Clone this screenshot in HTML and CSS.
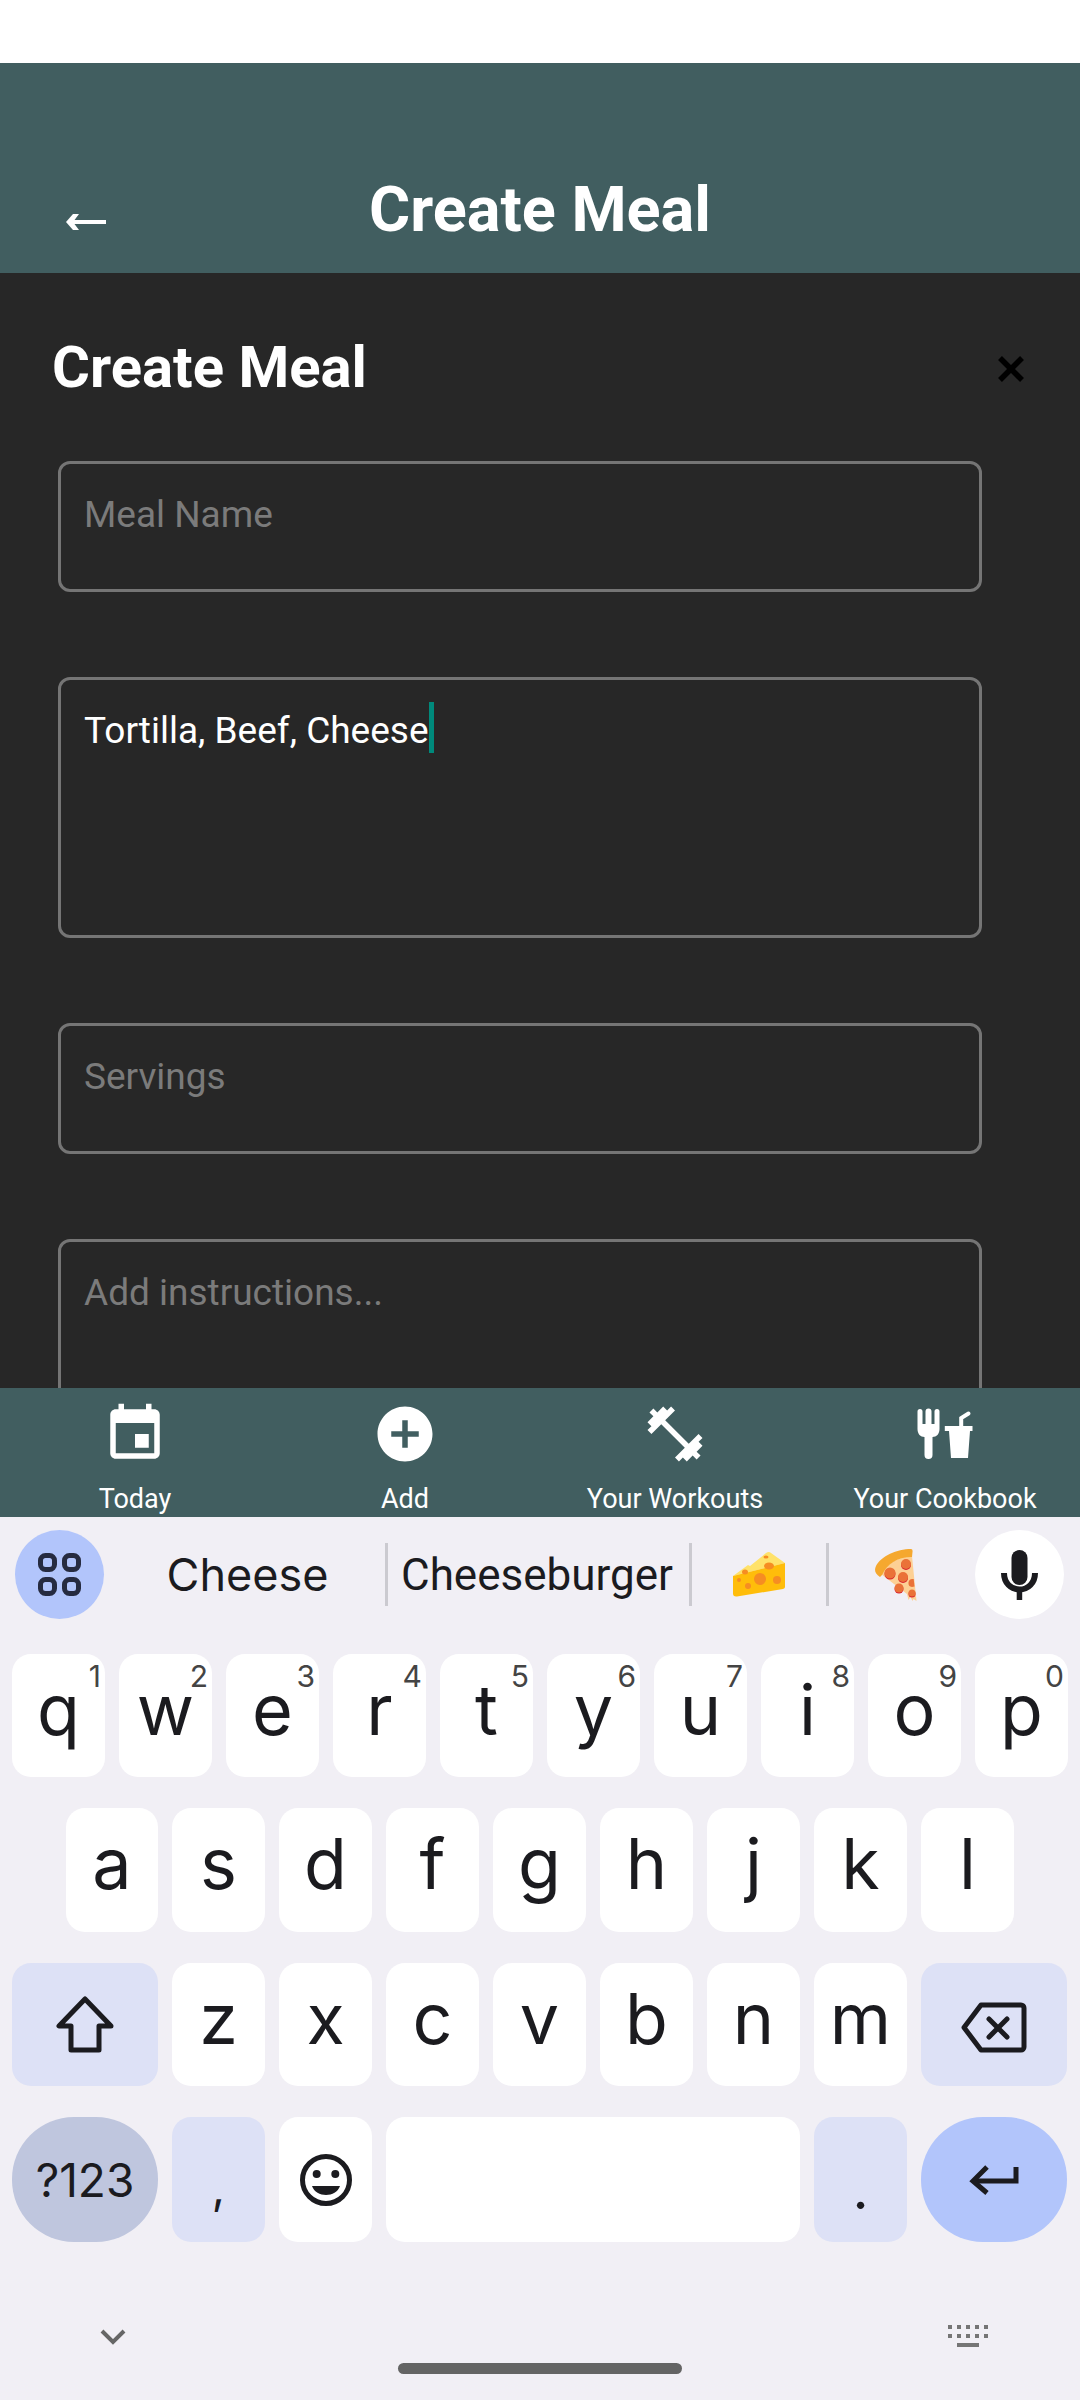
FILE: index.html
```html
<!DOCTYPE html>
<html lang="en">
<head>
  <meta charset="UTF-8" />
  <title>Create Meal</title>
  <link rel="stylesheet" href="styles.css">
</head>
<body>
  <div class="status-bar"></div>

  <header class="top-bar">
    <svg class="back-arrow" width="40" height="18" viewBox="0 0 40 18">
      <path d="M0 9L7 1h6L8.500 7H40v4H8.500L13 17H7z" fill="#fff"/>
    </svg>
    <h1 class="top-title">Create Meal</h1>
  </header>

  <main class="content">
    <div class="modal-head">
      <h2 class="modal-title">Create Meal</h2>
      <svg class="modal-close" width="26" height="26" viewBox="0 0 26 26">
        <path d="M2 2l22 22M24 2L2 24" stroke="#000" stroke-width="5.500" fill="none"/>
      </svg>
    </div>

    <form class="meal-form">
      <div class="field field-short"><span class="placeholder">Meal Name</span></div>
      <div class="field field-tall"><span class="typed">Tortilla, Beef, Cheese</span><span class="caret"></span></div>
      <div class="field field-short"><span class="placeholder">Servings</span></div>
      <div class="field field-tall"><span class="placeholder">Add instructions...</span></div>
    </form>
  </main>

  <nav class="tab-bar">
    <div class="tab">
      <svg class="tab-icon" viewBox="0 0 24 24"><path fill="#fff" d="M17 12h-5v5h5v-5zM16 1v2H8V1H6v2H5c-1.110 0-1.990.9-1.990 2L3 19c0 1.100.89 2 2 2h14c1.100 0 2-.9 2-2V5c0-1.100-.9-2-2-2h-1V1h-2zm3 18H5V8h14v11z"/></svg>
      <span class="tab-label">Today</span>
    </div>
    <div class="tab">
      <svg class="tab-icon" viewBox="0 0 24 24"><path fill="#fff" d="M12 2C6.480 2 2 6.480 2 12s4.480 10 10 10 10-4.480 10-10S17.520 2 12 2zm5 11h-4v4h-2v-4H7v-2h4V7h2v4h4v2z"/></svg>
      <span class="tab-label">Add</span>
    </div>
    <div class="tab">
      <svg class="tab-icon" viewBox="0 0 24 24"><path fill="#fff" d="M20.570 14.860L22 13.430 20.570 12 17 15.570 8.430 7 12 3.430 10.570 2 9.140 3.430 7.710 2 5.570 4.140 4.140 2.710 2.710 4.140l1.430 1.430L2 7.710l1.430 1.430L2 10.570 3.430 12 7 8.430 15.570 17 12 20.570 13.430 22l1.430-1.430L16.290 22l2.140-2.140 1.430 1.430 1.430-1.430-1.430-1.430L22 16.290z"/></svg>
      <span class="tab-label">Your Workouts</span>
    </div>
    <div class="tab">
      <svg class="tab-icon" viewBox="-5.500 -8 66 66">
        <path fill="#fff" d="M0 2.500a2.500 2.500 0 0 1 5 0V15h3V2.500a3 3 0 0 1 6 0V15h3V2.500a2.500 2.500 0 0 1 5 0V20c0 5-3 8-7 8v18a4 4 0 0 1-8 0V28c-4 0-7-3-7-8z"/>
        <path fill="#fff" d="M27.300 17H55v5h-2.500l-2 27h-17l-2-27h-4.200z"/>
        <path fill="none" stroke="#fff" stroke-width="4" stroke-linecap="round" d="M43.700 17V9L51 4.500"/>
      </svg>
      <span class="tab-label">Your Cookbook</span>
    </div>
  </nav>

  <section class="keyboard">
    <div class="suggestions">
      <div class="round-btn apps-btn">
        <svg width="43" height="43" viewBox="0 0 43 43" fill="none" stroke="#262b40" stroke-width="5">
          <rect x="2.500" y="2.500" width="14" height="14" rx="5"/>
          <rect x="26.500" y="2.500" width="14" height="14" rx="5"/>
          <rect x="2.500" y="26.500" width="14" height="14" rx="5"/>
          <rect x="26.500" y="26.500" width="14" height="14" rx="5"/>
        </svg>
      </div>
      <div class="suggestion suggestion-word">Cheese</div>
      <div class="suggestion suggestion-long">Cheeseburger</div>
      <div class="suggestion suggestion-emoji">
        <svg width="52" height="45" viewBox="0 0 52 45">
          <path fill="#ffe26a" d="M0 24L15 13l2 1L33 1q3-2 5 0l14 10z"/>
          <path fill="#ffbd0a" d="M0 24L52 11v24q0 1.500-2 2L4 44.500q-4 .5-4-3z"/>
          <g fill="#f68d22">
            <circle cx="27" cy="27" r="6"/>
            <ellipse cx="36" cy="14" rx="5" ry="3.500"/>
            <circle cx="44" cy="28" r="4"/>
            <circle cx="15" cy="34" r="3"/>
            <circle cx="6" cy="28" r="2"/>
            <ellipse cx="12" cy="20" rx="3" ry="2.500"/>
            <ellipse cx="33" cy="5" rx="2.500" ry="1.500"/>
          </g>
        </svg>
      </div>
      <div class="suggestion suggestion-last">
        <svg width="42" height="52" viewBox="0 0 42 52">
          <path fill="#fdd094" d="M6 25C12 14 24 8 37 7l4.500 45-3-2-1 2-2-4-2 3-1.500-6z"/>
          <path fill="#f5a82f" d="M5 28C0 25-1 21 1 17 6 7 22 0 36 0q2 0 1.500 3L37 8C22 8 12 15 7 26z"/>
          <g fill="#d9232e">
            <circle cx="31" cy="16" r="5"/>
            <circle cx="15" cy="25" r="5.500"/>
            <circle cx="28" cy="29" r="5"/>
            <circle cx="24" cy="40" r="4.500"/>
            <circle cx="37" cy="45" r="3.500"/>
          </g>
          <g fill="#ea7238">
            <circle cx="31" cy="15" r="5"/>
            <circle cx="15" cy="24" r="5.500"/>
            <circle cx="28" cy="28" r="5"/>
            <path d="M38 30a4 4 0 0 0-1 8l2.500-.5-.8-7.400z"/>
            <circle cx="24" cy="39" r="4.500"/>
            <circle cx="37" cy="44" r="3.500"/>
          </g>
        </svg>
      </div>
      <div class="round-btn mic-btn">
        <svg width="37" height="50" viewBox="0 0 37 50" fill="#1b1b1f">
          <rect x="10.500" y="0" width="16" height="35" rx="8"/>
          <path fill="none" stroke="#1b1b1f" stroke-width="6" d="M3 23c0 10 7 16.500 15.500 16.500S34 33 34 23"/>
          <rect x="15.700" y="38" width="5.500" height="12"/>
        </svg>
      </div>
    </div>

    <div class="key-rows">
      <div class="key-row">
        <div class="key">q<span class="hint">1</span></div>
        <div class="key">w<span class="hint">2</span></div>
        <div class="key">e<span class="hint">3</span></div>
        <div class="key">r<span class="hint">4</span></div>
        <div class="key">t<span class="hint">5</span></div>
        <div class="key">y<span class="hint">6</span></div>
        <div class="key">u<span class="hint">7</span></div>
        <div class="key">i<span class="hint">8</span></div>
        <div class="key">o<span class="hint">9</span></div>
        <div class="key">p<span class="hint">0</span></div>
      </div>
      <div class="key-row key-row-home">
        <div class="key">a</div>
        <div class="key">s</div>
        <div class="key">d</div>
        <div class="key">f</div>
        <div class="key">g</div>
        <div class="key">h</div>
        <div class="key">j</div>
        <div class="key">k</div>
        <div class="key">l</div>
      </div>
      <div class="key-row">
        <div class="key key-wide key-action">
          <svg width="58" height="57" viewBox="0 0 58 57" fill="none" stroke="#1b1b1f" stroke-width="5" stroke-linejoin="round">
            <path d="M29 3L3 30h12v24h28V30h12z"/>
          </svg>
        </div>
        <div class="key">z</div>
        <div class="key">x</div>
        <div class="key">c</div>
        <div class="key">v</div>
        <div class="key">b</div>
        <div class="key">n</div>
        <div class="key">m</div>
        <div class="key key-wide key-action">
          <svg class="backspace-icon" width="66" height="51" viewBox="0 0 66 51" fill="none" stroke="#1b1b1f" stroke-width="5" stroke-linejoin="round" stroke-linecap="round">
            <path d="M20 3h40a3 3 0 0 1 3 3v39a3 3 0 0 1-3 3H20L3 25.500z"/>
            <path d="M28 17l18 18M46 17L28 35"/>
          </svg>
        </div>
      </div>
      <div class="key-row key-row-bottom">
        <div class="key key-wide key-symbols">?123</div>
        <div class="key key-action key-comma">,</div>
        <div class="key">
          <svg width="52" height="52" viewBox="0 0 52 52">
            <circle cx="26" cy="26" r="23.500" fill="none" stroke="#1b1b1f" stroke-width="5"/>
            <circle cx="16.700" cy="20" r="4" fill="#1b1b1f"/>
            <circle cx="35.300" cy="20" r="4" fill="#1b1b1f"/>
            <path d="M12 32h28c-2 6-8 9-14 9s-12-3-14-9z" fill="#1b1b1f"/>
          </svg>
        </div>
        <div class="key key-space"></div>
        <div class="key key-action key-period">.</div>
        <div class="key key-wide key-enter">
          <svg width="50" height="30" viewBox="0 0 50 30" fill="none" stroke="#1b1b1f" stroke-width="5">
            <path d="M47 2v14H6"/>
            <path d="M18 2L4 16l14 12"/>
          </svg>
        </div>
      </div>
    </div>

    <div class="keyboard-foot">
      <svg width="26" height="16" viewBox="0 0 26 16" fill="none" stroke="#666" stroke-width="4">
        <path d="M2 2l11 11L24 2"/>
      </svg>
      <svg width="40" height="23" viewBox="0 0 40 23" fill="#757575">
        <path d="M0 0h4v4H0zM9 0h4v4H9zM18 0h4v4h-4zM27 0h4v4h-4zM36 0h4v4h-4zM0 9h4v4H0zM9 9h4v4H9zM18 9h4v4h-4zM27 9h4v4h-4zM36 9h4v4h-4zM9 18h22v4H9z"/>
      </svg>
    </div>
    <div class="home-pill"></div>
  </section>
</body>
</html>
```

FILE: styles.css
```css
* {
  box-sizing: border-box;
}

body {
  margin: 0;
  width: 1080px;
  height: 2400px;
  overflow: hidden;
  display: flex;
  flex-direction: column;
  background: #fff;
  font-family: Roboto, sans-serif;
}

.status-bar {
  height: 63px;
  background: #fff;
}

/* App bar */
.top-bar {
  position: relative;
  height: 210px;
  padding-top: 112px;
  background: #415e60;
  text-align: center;
}

.top-title {
  margin: 0;
  font-size: 63px;
  line-height: 70px;
  font-weight: 700;
  color: #fff;
}

.back-arrow {
  position: absolute;
  left: 66px;
  top: 150px;
}

/* Form area */
.content {
  height: 1115px;
  overflow: hidden;
  background: #272727;
}

.modal-head {
  display: flex;
  justify-content: space-between;
  align-items: center;
  height: 70px;
  margin-top: 59px;
  padding: 0 56px 0 52px;
}

.modal-title {
  margin: 0;
  font-size: 58px;
  line-height: 64px;
  font-weight: 700;
  color: #fff;
}

.modal-close {
  margin-top: 4px;
}

.meal-form {
  display: flex;
  flex-direction: column;
  gap: 85px;
  width: 924px;
  margin: 59px 0 0 58px;
}

.field {
  flex: none;
  padding: 27px 23px;
  border: 3px solid #757575;
  border-radius: 12px;
  font-size: 37px;
  line-height: 48px;
}

.field-short {
  height: 131px;
}

.field-tall {
  height: 261px;
}

.placeholder {
  color: #7b7b7b;
}

.typed {
  color: #fff;
}

.caret {
  display: inline-block;
  vertical-align: top;
  width: 5px;
  height: 51px;
  margin-top: -5px;
  margin-bottom: -5px;
  background: #00897b;
}

/* Bottom tabs */
.tab-bar {
  display: flex;
  height: 129px;
  background: #415e60;
}

.tab {
  flex: 1;
  display: flex;
  flex-direction: column;
  align-items: center;
  padding-top: 13px;
}

.tab-icon {
  width: 66px;
  height: 66px;
}

.tab-label {
  margin-top: 16px;
  font-size: 27px;
  line-height: 32px;
  color: #fff;
  white-space: nowrap;
}

/* Keyboard */
.keyboard {
  position: relative;
  flex: 1;
  background: #f1eff5;
  color: #1b1b1f;
  font-family: Inter, sans-serif;
}

.suggestions {
  display: flex;
  align-items: center;
  height: 89px;
  margin-top: 13px;
  padding-left: 15px;
}

.round-btn {
  flex: none;
  display: flex;
  align-items: center;
  justify-content: center;
  width: 89px;
  height: 89px;
  border-radius: 50%;
}

.apps-btn {
  background: #b2c5fb;
}

.mic-btn {
  margin-left: 13px;
  background: #fff;
}

.suggestion {
  flex: none;
  display: flex;
  align-items: center;
  justify-content: center;
  height: 63px;
  font-size: 45px;
  border-right: 3px solid #cbcad0;
}

.suggestion-word {
  width: 284px;
  padding-left: 6px;
}

.suggestion-long {
  width: 304px;
  padding-right: 3px;
  font-family: Roboto, sans-serif;
  font-size: 44px;
}

.suggestion-emoji {
  width: 137px;
}

.suggestion-last {
  width: 133px;
  border-right: none;
}

.key-rows {
  display: flex;
  flex-direction: column;
  gap: 31px;
  margin-top: 35px;
  padding-left: 12px;
}

.key-row {
  display: flex;
  gap: 14px;
  height: 123px;
}

.key-row-home {
  height: 124px;
  padding-left: 54px;
}

.key-row-home .key:first-child {
  width: 92px;
}

.key-row-bottom {
  height: 125px;
}

.key {
  position: relative;
  flex: none;
  display: flex;
  align-items: center;
  justify-content: center;
  width: 93px;
  height: 100%;
  padding-bottom: 12px;
  border-radius: 19px;
  background: #fff;
  font-size: 70px;
  line-height: 70px;
}

.hint {
  position: absolute;
  top: 4px;
  right: 4px;
  font-size: 30px;
  line-height: 36px;
  color: #444;
}

.key svg {
  margin-top: 12px;
}

.key .backspace-icon {
  margin-top: 18px;
}

.key-wide {
  width: 146px;
}

.key-action {
  background: #dde1f6;
}

.key-symbols {
  padding-bottom: 0;
  border-radius: 62px;
  background: #bfc6de;
  font-size: 46px;
}

.key-enter {
  border-radius: 62px;
  background: #b2c5fb;
}

.key-space {
  width: 414px;
}

.key-comma {
  padding-bottom: 0;
  padding-top: 14px;
  font-size: 46px;
}

.key-period {
  padding-bottom: 0;
  padding-top: 18px;
  font-size: 56px;
}

.keyboard-foot {
  display: flex;
  justify-content: space-between;
  align-items: center;
  height: 23px;
  margin-top: 83px;
  padding: 0 92px 0 100px;
}

.home-pill {
  position: absolute;
  left: 398px;
  top: 846px;
  width: 284px;
  height: 11px;
  border-radius: 6px;
  background: #646464;
}
```
